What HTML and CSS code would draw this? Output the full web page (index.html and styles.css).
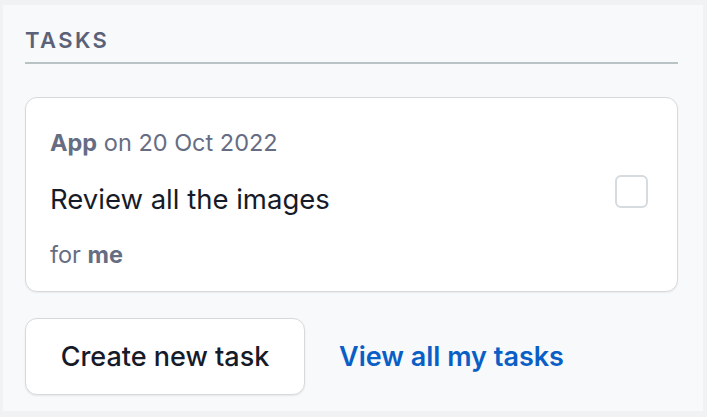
FILE: index.html
```html
<!DOCTYPE html>
<html lang="en">
<head>
<meta charset="utf-8">
<title>Tasks</title>
<link rel="stylesheet" href="styles.css">
</head>
<body>
<section class="panel">
  <h2 class="panel-title">Tasks</h2>
  <div class="task-card">
    <div class="task-body">
      <p class="task-meta"><strong>App</strong> on 20 Oct 2022</p>
      <p class="task-title">Review all the images</p>
      <p class="task-meta">for <strong>me</strong></p>
    </div>
    <span class="checkbox" role="checkbox" aria-checked="false"></span>
  </div>
  <div class="actions">
    <button class="btn">Create new task</button>
    <a class="link" href="#">View all my tasks</a>
  </div>
</section>
</body>
</html>
```
FILE: styles.css
```css
html, body {
  margin: 0;
  padding: 0;
}
body {
  background: #f1f2f3;
  font-family: Inter, "Liberation Sans", Arial, sans-serif;
  width: 707px;
  height: 417px;
  overflow: hidden;
}
.panel {
  margin: 5px 4px 0 3px;
  height: 406px;
  box-sizing: border-box;
  background: #f7f9fa;
  padding: 21px 25px 0 22px;
}
.panel-title {
  margin: 0;
  font-size: 22px;
  font-weight: 600;
  letter-spacing: 2.4px;
  text-transform: uppercase;
  color: #5b6178;
  line-height: 28px;
  padding-bottom: 8px;
  border-bottom: 2px solid #b9c2c5;
}
.task-card {
  margin-top: 33px;
  background: #fff;
  border: 1.5px solid #d6dadd;
  border-radius: 12px;
  box-shadow: 0 1px 2px rgba(0,0,0,0.06);
  height: 195px;
  box-sizing: border-box;
  padding: 30px 29px 0 24px;
  display: flex;
  align-items: flex-start;
  justify-content: space-between;
}
.task-body p {
  margin: 0;
}
.task-meta {
  font-size: 23.5px;
  color: #666d83;
  line-height: 30px;
  white-space: nowrap;
}
.task-meta strong {
  font-weight: 700;
}
.task-title {
  font-size: 27.5px;
  color: #161b29;
  line-height: 34px;
  margin: 24px 0 !important;
  white-space: nowrap;
}
.checkbox {
  width: 29px;
  height: 29px;
  border: 2px solid #d5dbdf;
  border-radius: 6px;
  margin-top: 47px;
}
.actions {
  margin-top: 26px;
  display: flex;
  align-items: center;
  gap: 34px;
}
.btn {
  font-family: inherit;
  width: 280px;
  height: 77px;
  background: #fff;
  border: 1.5px solid #d6dadd;
  border-radius: 12px;
  box-shadow: 0 1px 2px rgba(0,0,0,0.08);
  font-size: 27px;
  font-weight: 500;
  color: #161b29;
  padding: 0;
}
.link {
  font-size: 27px;
  font-weight: 600;
  color: #0a5fc6;
  text-decoration: none;
}
```
